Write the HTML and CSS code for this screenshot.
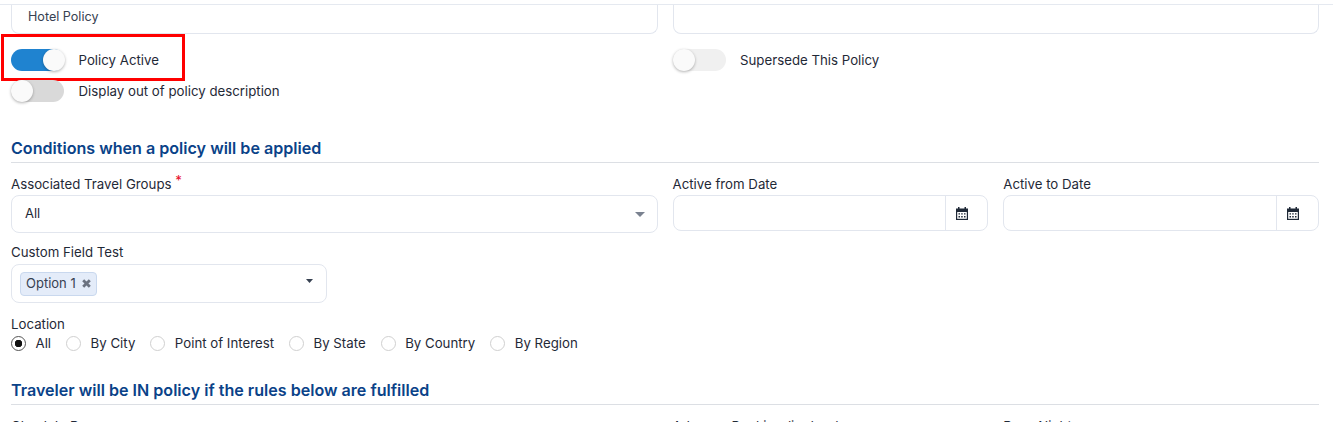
FILE: index.html
```html
<!DOCTYPE html>
<html lang="en">
<head>
  <meta charset="UTF-8" />
  <title>Hotel Policy</title>
  <link rel="stylesheet" href="styles.css">
</head>
<body>
  <div class="topline"></div>
  <div class="container">
    <div class="two-col">
      <div class="input input-cut">Hotel Policy</div>
      <div class="input input-cut"></div>
    </div>

    <div class="two-col toggle-row">
      <label class="toggle-item">
        <span class="switch on"><span class="knob"></span></span>
        <span>Policy Active</span>
      </label>
      <label class="toggle-item">
        <span class="switch light"><span class="knob"></span></span>
        <span>Supersede This Policy</span>
      </label>
      <div class="highlight"></div>
    </div>
    <label class="toggle-item second-toggle">
      <span class="switch"><span class="knob"></span></span>
      <span>Display out of policy description</span>
    </label>

    <h3 class="section-title first">Conditions when a policy will be applied</h3>

    <div class="two-col">
      <div class="field">
        <div class="label">Associated Travel Groups <span class="req">*</span></div>
        <div class="input select">
          <span>All</span>
          <svg class="caret" width="10" height="5" viewBox="0 0 10 5"><path d="M0 0h10L5 5z" fill="#7a8290"/></svg>
        </div>
      </div>
      <div class="date-col">
        <div class="field">
          <div class="label">Active from Date</div>
          <div class="input date">
            <span class="date-value"></span>
            <span class="date-icon">
              <svg width="12" height="13" viewBox="0 0 12 13"><path d="M2 0h1.500v2H2zM8.500 0H10v2H8.500zM0 1.500h12V13H0z" fill="#1f2937"/><path d="M1.200 5h9.600v6.800H1.200z" fill="#fff"/><path d="M2.500 6.200h1.500v1.400H2.500zM5.200 6.200h1.500v1.400H5.200zM8 6.200h1.500v1.400H8zM2.500 9h1.500v1.400H2.500zM5.200 9h1.500v1.400H5.200zM8 9h1.500v1.400H8z" fill="#1f2937"/></svg>
            </span>
          </div>
        </div>
        <div class="field">
          <div class="label">Active to Date</div>
          <div class="input date">
            <span class="date-value"></span>
            <span class="date-icon">
              <svg width="12" height="13" viewBox="0 0 12 13"><path d="M2 0h1.500v2H2zM8.500 0H10v2H8.500zM0 1.500h12V13H0z" fill="#1f2937"/><path d="M1.200 5h9.600v6.800H1.200z" fill="#fff"/><path d="M2.500 6.200h1.500v1.400H2.500zM5.200 6.200h1.500v1.400H5.200zM8 6.200h1.500v1.400H8zM2.500 9h1.500v1.400H2.500zM5.200 9h1.500v1.400H5.200zM8 9h1.500v1.400H8z" fill="#1f2937"/></svg>
            </span>
          </div>
        </div>
      </div>
    </div>

    <div class="field custom-field">
      <div class="label">Custom Field Test</div>
      <div class="input multi">
        <span class="tag">Option 1
          <svg width="9" height="9" viewBox="0 0 9 9"><path d="M1.200 1.200l6.600 6.600M7.800 1.200l-6.600 6.600" stroke="#6b7280" stroke-width="2.800"/></svg>
        </span>
        <svg class="caret-small" width="7" height="4" viewBox="0 0 7 4"><path d="M0 0h7L3.500 4z" fill="#374151"/></svg>
      </div>
    </div>

    <div class="location">
      <div class="label">Location</div>
      <div class="radios">
        <label class="radio-item"><span class="radio checked"></span>All</label>
        <label class="radio-item"><span class="radio"></span>By City</label>
        <label class="radio-item"><span class="radio"></span>Point of Interest</label>
        <label class="radio-item"><span class="radio"></span>By State</label>
        <label class="radio-item"><span class="radio"></span>By Country</label>
        <label class="radio-item"><span class="radio"></span>By Region</label>
      </div>
    </div>

    <h3 class="section-title second">Traveler will be IN policy if the rules below are fulfilled</h3>

    <div class="two-col">
      <div class="label">Check In Days</div>
      <div class="date-col">
        <div class="label">Advance Booking (in days)</div>
        <div class="label">Days Night</div>
      </div>
    </div>
  </div>
</body>
</html>
```

FILE: styles.css
```css
html, body {
  height: 422px;
  overflow: hidden;
}
body {
  margin: 0;
  background-color: #fff;
  color: #1f2937;
  font-family: Inter, "Liberation Sans", sans-serif;
  font-size: 13.25px;
  line-height: 16px;
}
.topline {
  height: 4px;
  border-bottom: 1px solid #e5e9f0;
}
.container {
  padding: 0 14px 0 11px;
}
.two-col {
  display: grid;
  grid-template-columns: 1fr 1fr;
  column-gap: 15px;
}
.date-col {
  display: grid;
  grid-template-columns: 1fr 1fr;
  column-gap: 15px;
}
.input {
  box-sizing: border-box;
  border: 1px solid #e2e6ee;
  border-radius: 8px;
  background-color: #fff;
  font-size: 13px;
}
.input-cut {
  height: 29px;
  padding: 4px 16px 0;
  border-top: none;
  border-top-left-radius: 0;
  border-top-right-radius: 0;
  font-size: 12.6px;
  color: #374151;
}
.toggle-row {
  position: relative;
  margin-top: 15px;
}
.toggle-item {
  display: flex;
  align-items: center;
  gap: 14.5px;
}
.second-toggle {
  margin-top: 9px;
}
.switch {
  position: relative;
  display: block;
  width: 53px;
  height: 22px;
  border-radius: 11px;
  background-color: #d9d9d9;
}
.switch.on {
  background-color: #1f83d0;
}
.switch.light {
  background-color: #f0f0f0;
}
.knob {
  position: absolute;
  top: 0;
  left: 0;
  width: 22px;
  height: 22px;
  border-radius: 50%;
  background-color: #fafafa;
  box-shadow: 0 1px 3px rgba(0,0,0,0.3);
}
.switch.on .knob {
  left: 32px;
}
.highlight {
  position: absolute;
  top: -15px;
  left: -10px;
  width: 178px;
  height: 41px;
  border: 3px solid #ff0000;
}
.section-title {
  margin: 0;
  padding-bottom: 4px;
  border-bottom: 1px solid #dcdfe4;
  color: #0a4288;
  font-size: 16.1px;
  font-weight: 600;
  line-height: 20px;
}
.section-title.first {
  margin-top: 36px;
}
.section-title.second {
  margin-top: 29px;
}
.label {
  height: 19px;
  margin-top: 13px;
}
.req {
  position: relative;
  top: -4px;
  color: #e8112d;
}
.select {
  display: flex;
  align-items: center;
  justify-content: space-between;
  height: 38px;
  padding: 0 12px 2px 13px;
}
.caret {
  margin-top: 3px;
}
.date {
  display: flex;
  height: 36px;
}
.date-value {
  flex: 1;
}
.date-icon {
  display: flex;
  align-items: center;
  width: 31px;
  padding-left: 10px;
  border-left: 1px solid #e2e6ee;
}
.custom-field {
  width: 316px;
}
.custom-field .label {
  height: 20px;
  margin-top: 11px;
}
.multi {
  display: flex;
  align-items: center;
  justify-content: space-between;
  height: 39px;
  padding: 0 13px 0 8px;
}
.tag {
  display: flex;
  align-items: center;
  gap: 6px;
  height: 21px;
  padding: 0 5px 1px;
  border: 1px solid #c9d8ee;
  border-radius: 4px;
  background-color: #e4ecf9;
  color: #374151;
}
.caret-small {
  margin-bottom: 6px;
}
.location .label {
  height: 16px;
}
.radios {
  display: flex;
  gap: 15px;
  margin-top: 3px;
}
.radio-item {
  display: flex;
  align-items: center;
  gap: 9.5px;
}
.radio {
  box-sizing: border-box;
  width: 15px;
  height: 15px;
  border: 1px solid #d0d0d0;
  border-radius: 50%;
  background-color: #fff;
}
.radio.checked {
  border-color: #555;
  background: radial-gradient(circle, #111 0, #111 3.5px, #fff 4px);
}
```
